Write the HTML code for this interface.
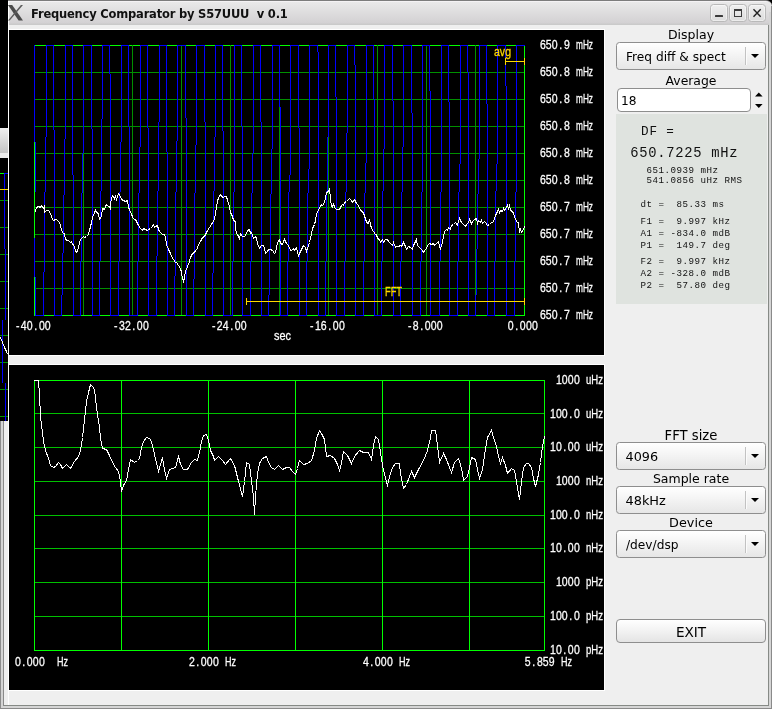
<!DOCTYPE html>
<html><head><meta charset="utf-8"><title>Frequency Comparator by S57UUU v 0.1</title>
<style>
html,body{margin:0;padding:0;}
body{width:772px;height:709px;overflow:hidden;position:relative;background:#efefef;font-family:"DejaVu Sans","Liberation Sans",sans-serif;font-size:12px;color:#000;}
#root{position:absolute;left:0;top:0;width:772px;height:709px;will-change:transform;}
.abs{position:absolute;}
#titlebar{left:8px;top:0;width:764px;height:25px;background:linear-gradient(#f4f2f4 0px,#f4f2f4 1px,#e9e9e9 1px,#d3d1d3 22px,#cacaca 23px,#cacaca 24px);border-top:1px solid #7c7c7c;box-sizing:border-box;border-top-right-radius:6px;}
#corner{left:760px;top:0;width:12px;height:12px;background:#000;}
#title{left:31px;top:7px;font-weight:bold;font-size:11.5px;letter-spacing:-0.2px;line-height:14px;white-space:pre;color:#111;}
.wbtn{top:4px;width:17.5px;height:18px;box-sizing:border-box;border:1px solid #b9b9b9;border-radius:3.5px;background:linear-gradient(#efefef,#dcdcdc);box-shadow:inset 0 0 0 1px rgba(255,255,255,.45);}
.lbl{z-index:2;text-align:center;left:616px;width:150px;line-height:14px;white-space:pre;}
.combo{left:616px;width:150px;height:28px;box-sizing:border-box;border:1px solid #8e8e8e;border-radius:3.5px;background:linear-gradient(#ffffff,#f4f4f4 45%,#e6e6e6);}
.combo span{position:absolute;left:9px;top:6.5px;line-height:14px;white-space:pre;font-size:12.2px;}
.combo i{position:absolute;left:128px;top:4px;width:1px;height:18px;background:#c2c2c2;box-shadow:1px 0 0 #fbfbfb;}
.combo b{position:absolute;left:133.5px;top:11.4px;width:0;height:0;border-left:4px solid transparent;border-right:4px solid transparent;border-top:4px solid #000;}
#spin{left:617px;top:88px;width:134px;height:24px;box-sizing:border-box;border:1px solid #8e8e8e;border-radius:4px;background:#fff;}
#spin span{position:absolute;left:3px;top:5px;line-height:14px;font-size:12.2px;}
#panel{left:616px;top:114px;width:151px;height:190px;background:#dfe3df;font-family:"Liberation Mono","DejaVu Sans Mono",monospace;color:#111;}
#panel div{position:absolute;white-space:pre;line-height:12px;}
#exit{left:616px;top:619px;width:150px;height:24px;box-sizing:border-box;border:1px solid #8e8e8e;border-radius:4px;background:linear-gradient(#ffffff,#f2f2f2 50%,#e4e4e4);text-align:center;font-size:13.6px;line-height:24px;}
</style></head>
<body>
<div id="root">
<div class="abs" id="corner"></div>
<div class="abs" id="titlebar"></div>
<svg width="772" height="709" viewBox="0 0 772 709" style="position:absolute;left:0;top:0" shape-rendering="crispEdges">
<style>text{font-family:"Liberation Sans","DejaVu Sans",sans-serif;font-size:10.5px;}</style>
<rect x="8" y="29" width="597" height="327" fill="#fff"/>
<rect x="8" y="364" width="597" height="327" fill="#fff"/>
<rect x="9" y="30" width="595" height="325" fill="#000"/>
<rect x="9" y="365" width="595" height="325" fill="#000"/>
<path d="M34 45h491v271h-491z M35 46v269h489v-269z" fill="#00ff00" fill-rule="evenodd"/>
<path d="M35 72h489v1h-489zM35 99h489v1h-489zM35 126h489v1h-489zM35 153h489v1h-489zM35 180h489v1h-489zM35 207h489v1h-489zM35 234h489v1h-489zM35 261h489v1h-489zM35 288h489v1h-489zM83 45h1v270h-1zM132 45h1v270h-1zM181 45h1v270h-1zM230 45h1v270h-1zM279 45h1v270h-1zM328 45h1v270h-1zM377 45h1v270h-1zM426 45h1v270h-1zM475 45h1v270h-1z" fill="#009000"/>
<path d="M34 45h1v97h-1zM35 142h1v50h-1zM34 238h1v39h-1zM35 277h1v39h-1zM46 45h1v92h-1zM45 137h1v55h-1zM44 192h1v80h-1zM43 272h1v44h-1zM35 315h9v1h-9zM46 45h8v1h-8zM53 45h1v85h-1zM54 130h1v186h-1zM65 45h1v94h-1zM64 139h1v56h-1zM63 195h1v58h-1zM62 253h1v42h-1zM61 295h1v21h-1zM54 315h8v1h-8zM65 45h8v1h-8zM72 45h1v130h-1zM73 175h1v141h-1zM83 45h1v108h-1zM82 153h1v40h-1zM81 193h1v68h-1zM80 261h1v55h-1zM73 315h8v1h-8zM83 45h9v1h-9zM91 45h1v84h-1zM92 129h1v187h-1zM102 45h1v74h-1zM101 119h1v72h-1zM100 191h1v70h-1zM99 261h1v55h-1zM92 315h8v1h-8zM102 45h8v1h-8zM109 45h1v29h-1zM110 74h1v242h-1zM121 45h1v97h-1zM120 142h1v50h-1zM119 192h1v69h-1zM118 261h1v55h-1zM110 315h9v1h-9zM121 45h8v1h-8zM128 45h1v82h-1zM129 127h1v189h-1zM140 45h1v102h-1zM139 147h1v46h-1zM138 193h1v68h-1zM137 261h1v55h-1zM129 315h9v1h-9zM140 45h8v1h-8zM147 45h1v83h-1zM148 128h1v188h-1zM159 45h1v77h-1zM158 122h1v69h-1zM157 191h1v65h-1zM156 256h1v60h-1zM148 315h9v1h-9zM159 45h8v1h-8zM166 45h1v107h-1zM167 152h1v164h-1zM177 45h1v96h-1zM176 141h1v51h-1zM175 192h1v84h-1zM174 276h1v40h-1zM167 315h8v1h-8zM177 45h9v1h-9zM185 45h1v73h-1zM186 118h1v198h-1zM196 45h1v100h-1zM195 145h1v48h-1zM194 193h1v86h-1zM193 279h1v37h-1zM186 315h8v1h-8zM196 45h9v1h-9zM204 45h1v77h-1zM205 122h1v194h-1zM215 45h1v92h-1zM214 137h1v54h-1zM213 191h1v82h-1zM212 273h1v43h-1zM205 315h8v1h-8zM215 45h8v1h-8zM222 45h1v86h-1zM223 131h1v185h-1zM234 45h1v147h-1zM233 192h1v69h-1zM232 261h1v55h-1zM223 315h10v1h-10zM234 45h8v1h-8zM241 45h1v81h-1zM242 126h1v190h-1zM253 45h1v108h-1zM252 153h1v40h-1zM251 193h1v68h-1zM250 261h1v55h-1zM242 315h9v1h-9zM253 45h8v1h-8zM260 45h1v77h-1zM261 122h1v194h-1zM272 45h1v104h-1zM271 149h1v45h-1zM270 194h1v55h-1zM269 249h1v46h-1zM268 295h1v21h-1zM261 315h8v1h-8zM272 45h8v1h-8zM279 45h1v62h-1zM280 107h1v209h-1zM290 45h1v130h-1zM289 175h1v17h-1zM288 192h1v69h-1zM287 261h1v55h-1zM280 315h8v1h-8zM290 45h9v1h-9zM298 45h1v83h-1zM299 128h1v188h-1zM309 45h1v124h-1zM308 169h1v24h-1zM307 193h1v68h-1zM306 261h1v55h-1zM299 315h8v1h-8zM309 45h9v1h-9zM317 45h1v7h-1zM318 52h1v264h-1zM328 45h1v92h-1zM327 137h1v54h-1zM326 191h1v70h-1zM325 261h1v55h-1zM318 315h8v1h-8zM328 45h8v1h-8zM335 45h1v52h-1zM336 97h1v219h-1zM347 45h1v88h-1zM346 133h1v59h-1zM345 192h1v69h-1zM344 261h1v55h-1zM336 315h9v1h-9zM347 45h8v1h-8zM354 45h1v20h-1zM355 65h1v251h-1zM366 45h1v118h-1zM365 163h1v30h-1zM364 193h1v68h-1zM363 261h1v55h-1zM355 315h9v1h-9zM366 45h8v1h-8zM373 45h1v54h-1zM374 99h1v217h-1zM384 45h1v104h-1zM383 149h1v42h-1zM382 191h1v70h-1zM381 261h1v55h-1zM374 315h8v1h-8zM384 45h9v1h-9zM392 45h1v56h-1zM393 101h1v215h-1zM403 45h1v102h-1zM402 147h1v45h-1zM401 192h1v69h-1zM400 261h1v55h-1zM393 315h8v1h-8zM403 45h9v1h-9zM411 45h1v68h-1zM412 113h1v203h-1zM422 45h1v147h-1zM421 192h1v69h-1zM420 261h1v55h-1zM412 315h9v1h-9zM422 45h8v1h-8zM429 45h1v46h-1zM430 91h1v225h-1zM441 45h1v147h-1zM440 192h1v69h-1zM439 261h1v55h-1zM430 315h10v1h-10zM441 45h8v1h-8zM448 45h1v57h-1zM449 102h1v214h-1zM460 45h1v119h-1zM459 164h1v28h-1zM458 192h1v69h-1zM457 261h1v55h-1zM449 315h9v1h-9zM460 45h8v1h-8zM467 45h1v27h-1zM468 72h1v244h-1zM479 45h1v114h-1zM478 159h1v35h-1zM477 194h1v55h-1zM476 249h1v46h-1zM475 295h1v21h-1zM468 315h8v1h-8zM479 45h8v1h-8zM486 45h1v59h-1zM487 104h1v212h-1zM497 45h1v119h-1zM496 164h1v27h-1zM495 191h1v70h-1zM494 261h1v55h-1zM487 315h8v1h-8zM497 45h9v1h-9zM505 45h1v41h-1zM506 86h1v230h-1zM516 45h1v147h-1zM515 192h1v69h-1zM514 261h1v55h-1zM506 315h9v1h-9zM516 45h9v1h-9z" fill="#0000ff"/>
<rect x="34" y="142" width="1" height="96" fill="#00ff00"/>
<rect x="34" y="277" width="1" height="39" fill="#00ff00"/>
<polyline points="35.5,211.5 36.5,207.5 38.5,206.5 40.5,207.5 41.5,205.5 43.5,208.5 44.5,205.5 44.5,212.5 46.5,210.5 48.5,210.5 50.5,213.5 52.5,219.5 53.5,220.5 55.5,219.5 56.5,219.5 58.5,221.5 60.5,224.5 61.5,230.5 63.5,233.5 64.5,233.5 65.5,239.5 67.5,240.5 68.5,240.5 70.5,242.5 71.5,241.5 72.5,244.5 73.5,244.5 75.5,250.5 76.5,252.5 77.5,251.5 78.5,246.5 80.5,239.5 81.5,238.5 83.5,236.5 84.5,237.5 86.5,236.5 88.5,234.5 89.5,230.5 91.5,222.5 92.5,217.5 94.5,212.5 95.5,210.5 96.5,212.5 98.5,213.5 99.5,219.5 101.5,216.5 102.5,208.5 104.5,209.5 105.5,206.5 106.5,204.5 108.5,206.5 109.5,206.5 110.5,209.5 110.5,202.5 112.5,195.5 113.5,196.5 114.5,198.5 115.5,196.5 116.5,199.5 117.5,196.5 118.5,193.5 120.5,196.5 121.5,199.5 123.5,200.5 125.5,201.5 127.5,200.5 128.5,206.5 129.5,210.5 131.5,213.5 132.5,217.5 134.5,219.5 135.5,219.5 136.5,221.5 138.5,225.5 140.5,228.5 142.5,230.5 143.5,228.5 145.5,229.5 147.5,230.5 148.5,229.5 150.5,228.5 151.5,227.5 153.5,224.5 154.5,227.5 155.5,226.5 157.5,225.5 158.5,229.5 159.5,231.5 161.5,233.5 162.5,234.5 164.5,234.5 165.5,237.5 166.5,244.5 168.5,249.5 170.5,253.5 171.5,256.5 173.5,259.5 175.5,262.5 176.5,262.5 178.5,265.5 180.5,268.5 181.5,272.5 182.5,278.5 183.5,281.5 184.5,277.5 185.5,271.5 187.5,266.5 189.5,261.5 190.5,257.5 192.5,253.5 194.5,252.5 195.5,250.5 197.5,248.5 198.5,244.5 200.5,241.5 202.5,237.5 204.5,236.5 205.5,234.5 207.5,230.5 209.5,227.5 211.5,224.5 212.5,222.5 214.5,219.5 215.5,213.5 216.5,206.5 217.5,201.5 218.5,197.5 220.5,194.5 221.5,196.5 223.5,197.5 224.5,196.5 226.5,196.5 227.5,200.5 229.5,206.5 230.5,212.5 232.5,216.5 233.5,220.5 235.5,221.5 235.5,228.5 236.5,233.5 237.5,234.5 239.5,238.5 240.5,233.5 242.5,236.5 244.5,236.5 246.5,233.5 247.5,230.5 249.5,229.5 250.5,233.5 251.5,232.5 253.5,238.5 255.5,236.5 256.5,238.5 257.5,243.5 259.5,248.5 261.5,245.5 263.5,245.5 264.5,248.5 265.5,253.5 267.5,251.5 268.5,249.5 270.5,249.5 272.5,250.5 274.5,253.5 275.5,252.5 277.5,242.5 279.5,239.5 280.5,243.5 282.5,244.5 283.5,241.5 284.5,239.5 286.5,243.5 288.5,245.5 290.5,250.5 291.5,250.5 293.5,248.5 294.5,250.5 296.5,247.5 297.5,252.5 298.5,255.5 300.5,251.5 302.5,247.5 303.5,245.5 305.5,247.5 306.5,251.5 307.5,248.5 309.5,242.5 311.5,234.5 312.5,228.5 314.5,224.5 315.5,220.5 316.5,214.5 318.5,209.5 320.5,206.5 321.5,204.5 322.5,205.5 324.5,202.5 325.5,197.5 326.5,192.5 328.5,191.5 329.5,189.5 330.5,198.5 331.5,206.5 332.5,207.5 333.5,203.5 334.5,207.5 336.5,209.5 337.5,209.5 339.5,209.5 341.5,205.5 342.5,204.5 343.5,205.5 344.5,202.5 346.5,201.5 348.5,199.5 349.5,198.5 351.5,200.5 352.5,202.5 354.5,199.5 355.5,201.5 356.5,203.5 357.5,204.5 359.5,207.5 360.5,210.5 362.5,211.5 364.5,215.5 365.5,219.5 367.5,223.5 368.5,223.5 369.5,219.5 370.5,224.5 371.5,228.5 373.5,231.5 375.5,234.5 376.5,234.5 377.5,238.5 379.5,239.5 380.5,242.5 382.5,239.5 383.5,242.5 385.5,239.5 387.5,239.5 388.5,241.5 389.5,242.5 391.5,244.5 392.5,245.5 393.5,242.5 395.5,247.5 396.5,246.5 398.5,246.5 400.5,245.5 401.5,246.5 403.5,242.5 405.5,246.5 406.5,249.5 408.5,246.5 410.5,247.5 412.5,249.5 413.5,245.5 416.5,239.5 417.5,245.5 419.5,247.5 421.5,249.5 423.5,252.5 424.5,250.5 426.5,248.5 427.5,245.5 429.5,243.5 431.5,244.5 433.5,243.5 434.5,245.5 436.5,243.5 438.5,241.5 439.5,246.5 440.5,248.5 442.5,242.5 443.5,236.5 444.5,231.5 446.5,229.5 447.5,230.5 448.5,227.5 450.5,229.5 451.5,225.5 453.5,224.5 455.5,222.5 457.5,225.5 458.5,221.5 459.5,218.5 461.5,222.5 462.5,223.5 464.5,225.5 465.5,226.5 466.5,224.5 468.5,222.5 469.5,219.5 471.5,223.5 472.5,221.5 474.5,219.5 476.5,218.5 477.5,223.5 478.5,220.5 480.5,222.5 481.5,220.5 482.5,223.5 484.5,221.5 485.5,222.5 487.5,225.5 489.5,224.5 491.5,222.5 492.5,222.5 494.5,219.5 495.5,215.5 497.5,211.5 498.5,209.5 499.5,212.5 500.5,210.5 502.5,211.5 503.5,208.5 504.5,210.5 506.5,207.5 507.5,205.5 508.5,208.5 509.5,205.5 510.5,210.5 512.5,211.5 513.5,213.5 514.5,216.5 516.5,221.5 517.5,222.5 518.5,222.5 519.5,232.5 520.5,229.5 521.5,232.5 523.5,229.5 524.5,226.5" fill="none" stroke="#fff" stroke-width="1" stroke-linejoin="miter" stroke-linecap="square"/>
<path d="M246 301h279v1h-279z M246 298h1v7h-1z M524 298h1v7h-1z" fill="#ffd800"/>
<path d="M505 61h20v1h-20z M505 58h1v7h-1z M524 58h1v7h-1z" fill="#ffd800"/>
<g shape-rendering="auto" opacity="0.995">
<text transform="scale(1,1.14)" x="385" y="259.65" textLength="17" lengthAdjust="spacingAndGlyphs" fill="#ffd800" stroke="#ffd800" stroke-width="0.25">FFT</text>
<text transform="scale(1,1.14)" x="494" y="49.56" textLength="17" lengthAdjust="spacingAndGlyphs" fill="#ffd800" stroke="#ffd800" stroke-width="0.25">avg</text>
<text transform="scale(1,1.14)" x="539.88 545.88 551.88 559.34 563.88" y="43.42" fill="#ffffff" stroke="#ffffff" stroke-width="0.25" xml:space="preserve">650.9</text><text transform="scale(1,1.14)" x="576" y="43.42" textLength="17" lengthAdjust="spacingAndGlyphs" fill="#ffffff" stroke="#ffffff" stroke-width="0.25">mHz</text>
<text transform="scale(1,1.14)" x="539.88 545.88 551.88 559.34 563.88" y="67.11" fill="#ffffff" stroke="#ffffff" stroke-width="0.25" xml:space="preserve">650.8</text><text transform="scale(1,1.14)" x="576" y="67.11" textLength="17" lengthAdjust="spacingAndGlyphs" fill="#ffffff" stroke="#ffffff" stroke-width="0.25">mHz</text>
<text transform="scale(1,1.14)" x="539.88 545.88 551.88 559.34 563.88" y="90.79" fill="#ffffff" stroke="#ffffff" stroke-width="0.25" xml:space="preserve">650.8</text><text transform="scale(1,1.14)" x="576" y="90.79" textLength="17" lengthAdjust="spacingAndGlyphs" fill="#ffffff" stroke="#ffffff" stroke-width="0.25">mHz</text>
<text transform="scale(1,1.14)" x="539.88 545.88 551.88 559.34 563.88" y="114.47" fill="#ffffff" stroke="#ffffff" stroke-width="0.25" xml:space="preserve">650.8</text><text transform="scale(1,1.14)" x="576" y="114.47" textLength="17" lengthAdjust="spacingAndGlyphs" fill="#ffffff" stroke="#ffffff" stroke-width="0.25">mHz</text>
<text transform="scale(1,1.14)" x="539.88 545.88 551.88 559.34 563.88" y="138.16" fill="#ffffff" stroke="#ffffff" stroke-width="0.25" xml:space="preserve">650.8</text><text transform="scale(1,1.14)" x="576" y="138.16" textLength="17" lengthAdjust="spacingAndGlyphs" fill="#ffffff" stroke="#ffffff" stroke-width="0.25">mHz</text>
<text transform="scale(1,1.14)" x="539.88 545.88 551.88 559.34 563.88" y="161.84" fill="#ffffff" stroke="#ffffff" stroke-width="0.25" xml:space="preserve">650.8</text><text transform="scale(1,1.14)" x="576" y="161.84" textLength="17" lengthAdjust="spacingAndGlyphs" fill="#ffffff" stroke="#ffffff" stroke-width="0.25">mHz</text>
<text transform="scale(1,1.14)" x="539.88 545.88 551.88 559.34 563.88" y="185.53" fill="#ffffff" stroke="#ffffff" stroke-width="0.25" xml:space="preserve">650.7</text><text transform="scale(1,1.14)" x="576" y="185.53" textLength="17" lengthAdjust="spacingAndGlyphs" fill="#ffffff" stroke="#ffffff" stroke-width="0.25">mHz</text>
<text transform="scale(1,1.14)" x="539.88 545.88 551.88 559.34 563.88" y="209.21" fill="#ffffff" stroke="#ffffff" stroke-width="0.25" xml:space="preserve">650.7</text><text transform="scale(1,1.14)" x="576" y="209.21" textLength="17" lengthAdjust="spacingAndGlyphs" fill="#ffffff" stroke="#ffffff" stroke-width="0.25">mHz</text>
<text transform="scale(1,1.14)" x="539.88 545.88 551.88 559.34 563.88" y="232.89" fill="#ffffff" stroke="#ffffff" stroke-width="0.25" xml:space="preserve">650.7</text><text transform="scale(1,1.14)" x="576" y="232.89" textLength="17" lengthAdjust="spacingAndGlyphs" fill="#ffffff" stroke="#ffffff" stroke-width="0.25">mHz</text>
<text transform="scale(1,1.14)" x="539.88 545.88 551.88 559.34 563.88" y="256.58" fill="#ffffff" stroke="#ffffff" stroke-width="0.25" xml:space="preserve">650.7</text><text transform="scale(1,1.14)" x="576" y="256.58" textLength="17" lengthAdjust="spacingAndGlyphs" fill="#ffffff" stroke="#ffffff" stroke-width="0.25">mHz</text>
<text transform="scale(1,1.14)" x="539.88 545.88 551.88 559.34 563.88" y="280.26" fill="#ffffff" stroke="#ffffff" stroke-width="0.25" xml:space="preserve">650.7</text><text transform="scale(1,1.14)" x="576" y="280.26" textLength="17" lengthAdjust="spacingAndGlyphs" fill="#ffffff" stroke="#ffffff" stroke-width="0.25">mHz</text>
<text transform="scale(1,1.14)" x="16.05 20.88 26.88 34.34 38.88 44.88" y="289.47" fill="#ffffff" stroke="#ffffff" stroke-width="0.25" xml:space="preserve">-40.00</text>
<text transform="scale(1,1.14)" x="114.05 118.88 124.88 132.34 136.88 142.88" y="289.47" fill="#ffffff" stroke="#ffffff" stroke-width="0.25" xml:space="preserve">-32.00</text>
<text transform="scale(1,1.14)" x="212.05 216.88 222.88 230.34 234.88 240.88" y="289.47" fill="#ffffff" stroke="#ffffff" stroke-width="0.25" xml:space="preserve">-24.00</text>
<text transform="scale(1,1.14)" x="310.05 314.88 320.88 328.34 332.88 338.88" y="289.47" fill="#ffffff" stroke="#ffffff" stroke-width="0.25" xml:space="preserve">-16.00</text>
<text transform="scale(1,1.14)" x="408.05 412.88 420.34 424.88 430.88 436.88" y="289.47" fill="#ffffff" stroke="#ffffff" stroke-width="0.25" xml:space="preserve">-8.000</text>
<text transform="scale(1,1.14)" x="507.88 515.34 519.88 525.88 531.88" y="289.47" fill="#ffffff" stroke="#ffffff" stroke-width="0.25" xml:space="preserve">0.000</text>
<text transform="scale(1,1.14)" x="274" y="298.25" textLength="17" lengthAdjust="spacingAndGlyphs" fill="#ffffff" stroke="#ffffff" stroke-width="0.25">sec</text>
</g>
<path d="M34 380h511v271h-511z M35 381v269h509v-269z" fill="#00ff00" fill-rule="evenodd"/>
<path d="M35 413h509v1h-509zM35 447h509v1h-509zM35 481h509v1h-509zM35 515h509v1h-509zM35 548h509v1h-509zM35 582h509v1h-509zM35 616h509v1h-509z" fill="#00c000"/>
<path d="M121 381h1v269h-1zM208 381h1v269h-1zM295 381h1v269h-1zM382 381h1v269h-1zM469 381h1v269h-1z" fill="#00ff00"/>
<polyline points="34.5,380.5 38.5,380.5 39.5,395.5 40.5,416.5 42.5,432.5 43.5,441.5 45.5,450.5 48.5,458.5 50.5,465.5 53.5,467.5 55.5,466.5 58.5,462.5 60.5,464.5 62.5,468.5 66.5,464.5 70.5,468.5 74.5,461.5 78.5,456.5 80.5,450.5 82.5,437.5 84.5,419.5 86.5,401.5 88.5,392.5 90.5,384.5 92.5,386.5 94.5,389.5 95.5,398.5 97.5,414.5 99.5,427.5 100.5,438.5 102.5,448.5 106.5,449.5 109.5,455.5 112.5,462.5 115.5,467.5 118.5,471.5 120.5,481.5 121.5,491.5 123.5,485.5 126.5,480.5 128.5,469.5 130.5,459.5 134.5,462.5 137.5,460.5 139.5,458.5 141.5,447.5 143.5,441.5 146.5,437.5 149.5,438.5 151.5,441.5 154.5,454.5 158.5,471.5 162.5,457.5 164.5,469.5 166.5,478.5 169.5,469.5 172.5,468.5 175.5,467.5 178.5,456.5 180.5,464.5 183.5,469.5 187.5,469.5 191.5,462.5 194.5,459.5 197.5,460.5 199.5,452.5 201.5,441.5 203.5,435.5 206.5,434.5 208.5,440.5 210.5,450.5 213.5,456.5 214.5,460.5 218.5,456.5 222.5,460.5 225.5,464.5 230.5,458.5 234.5,465.5 238.5,481.5 242.5,496.5 244.5,481.5 246.5,462.5 249.5,464.5 251.5,481.5 253.5,496.5 254.5,514.5 255.5,496.5 257.5,473.5 259.5,463.5 262.5,458.5 266.5,456.5 268.5,462.5 271.5,467.5 274.5,469.5 278.5,465.5 282.5,469.5 286.5,467.5 289.5,467.5 292.5,471.5 295.5,474.5 297.5,468.5 299.5,460.5 303.5,464.5 307.5,463.5 311.5,460.5 314.5,450.5 316.5,438.5 319.5,430.5 321.5,433.5 324.5,439.5 326.5,456.5 330.5,455.5 334.5,458.5 337.5,464.5 339.5,470.5 341.5,463.5 343.5,451.5 347.5,455.5 351.5,463.5 354.5,456.5 359.5,450.5 363.5,452.5 368.5,452.5 371.5,459.5 373.5,445.5 375.5,436.5 378.5,439.5 380.5,452.5 382.5,465.5 384.5,474.5 387.5,485.5 390.5,473.5 392.5,467.5 395.5,463.5 399.5,463.5 400.5,473.5 403.5,488.5 406.5,484.5 409.5,476.5 411.5,471.5 414.5,477.5 418.5,469.5 423.5,460.5 427.5,450.5 430.5,437.5 431.5,430.5 435.5,430.5 437.5,445.5 439.5,462.5 443.5,453.5 446.5,459.5 449.5,467.5 451.5,472.5 454.5,462.5 458.5,458.5 460.5,464.5 462.5,473.5 463.5,480.5 467.5,476.5 469.5,467.5 471.5,457.5 475.5,459.5 477.5,469.5 479.5,478.5 482.5,469.5 484.5,455.5 487.5,437.5 491.5,430.5 493.5,437.5 496.5,446.5 498.5,456.5 500.5,463.5 502.5,457.5 505.5,465.5 507.5,473.5 511.5,468.5 514.5,470.5 516.5,481.5 519.5,499.5 521.5,481.5 523.5,467.5 526.5,463.5 528.5,463.5 531.5,467.5 533.5,478.5 535.5,486.5 538.5,474.5 540.5,462.5 542.5,446.5 544.5,436.5" fill="none" stroke="#fff" stroke-width="1" stroke-linejoin="miter" stroke-linecap="square"/>
<g shape-rendering="auto" opacity="0.995">
<text transform="scale(1,1.14)" x="555.88 561.88 567.88 573.88" y="337.28" fill="#ffffff" stroke="#ffffff" stroke-width="0.25" xml:space="preserve">1000</text><text transform="scale(1,1.14)" x="586" y="337.28" textLength="17" lengthAdjust="spacingAndGlyphs" fill="#ffffff" stroke="#ffffff" stroke-width="0.25">uHz</text>
<text transform="scale(1,1.14)" x="549.88 555.88 561.88 569.34 573.88" y="366.23" fill="#ffffff" stroke="#ffffff" stroke-width="0.25" xml:space="preserve">100.0</text><text transform="scale(1,1.14)" x="586" y="366.23" textLength="17" lengthAdjust="spacingAndGlyphs" fill="#ffffff" stroke="#ffffff" stroke-width="0.25">uHz</text>
<text transform="scale(1,1.14)" x="549.88 555.88 563.34 567.88 573.88" y="396.05" fill="#ffffff" stroke="#ffffff" stroke-width="0.25" xml:space="preserve">10.00</text><text transform="scale(1,1.14)" x="586" y="396.05" textLength="17" lengthAdjust="spacingAndGlyphs" fill="#ffffff" stroke="#ffffff" stroke-width="0.25">uHz</text>
<text transform="scale(1,1.14)" x="555.88 561.88 567.88 573.88" y="425.88" fill="#ffffff" stroke="#ffffff" stroke-width="0.25" xml:space="preserve">1000</text><text transform="scale(1,1.14)" x="586" y="425.88" textLength="17" lengthAdjust="spacingAndGlyphs" fill="#ffffff" stroke="#ffffff" stroke-width="0.25">nHz</text>
<text transform="scale(1,1.14)" x="549.88 555.88 561.88 569.34 573.88" y="455.70" fill="#ffffff" stroke="#ffffff" stroke-width="0.25" xml:space="preserve">100.0</text><text transform="scale(1,1.14)" x="586" y="455.70" textLength="17" lengthAdjust="spacingAndGlyphs" fill="#ffffff" stroke="#ffffff" stroke-width="0.25">nHz</text>
<text transform="scale(1,1.14)" x="549.88 555.88 563.34 567.88 573.88" y="484.65" fill="#ffffff" stroke="#ffffff" stroke-width="0.25" xml:space="preserve">10.00</text><text transform="scale(1,1.14)" x="586" y="484.65" textLength="17" lengthAdjust="spacingAndGlyphs" fill="#ffffff" stroke="#ffffff" stroke-width="0.25">nHz</text>
<text transform="scale(1,1.14)" x="555.88 561.88 567.88 573.88" y="514.47" fill="#ffffff" stroke="#ffffff" stroke-width="0.25" xml:space="preserve">1000</text><text transform="scale(1,1.14)" x="586" y="514.47" textLength="17" lengthAdjust="spacingAndGlyphs" fill="#ffffff" stroke="#ffffff" stroke-width="0.25">pHz</text>
<text transform="scale(1,1.14)" x="549.88 555.88 561.88 569.34 573.88" y="544.30" fill="#ffffff" stroke="#ffffff" stroke-width="0.25" xml:space="preserve">100.0</text><text transform="scale(1,1.14)" x="586" y="544.30" textLength="17" lengthAdjust="spacingAndGlyphs" fill="#ffffff" stroke="#ffffff" stroke-width="0.25">pHz</text>
<text transform="scale(1,1.14)" x="549.88 555.88 563.34 567.88 573.88" y="574.12" fill="#ffffff" stroke="#ffffff" stroke-width="0.25" xml:space="preserve">10.00</text><text transform="scale(1,1.14)" x="586" y="574.12" textLength="17" lengthAdjust="spacingAndGlyphs" fill="#ffffff" stroke="#ffffff" stroke-width="0.25">pHz</text>
<text transform="scale(1,1.14)" x="14.88 22.34 26.88 32.88 38.88" y="584.21" fill="#ffffff" stroke="#ffffff" stroke-width="0.25" xml:space="preserve">0.000</text><text transform="scale(1,1.14)" x="57" y="584.21" textLength="11" lengthAdjust="spacingAndGlyphs" fill="#ffffff" stroke="#ffffff" stroke-width="0.25">Hz</text>
<text transform="scale(1,1.14)" x="188.88 196.34 200.88 206.88 212.88" y="584.21" fill="#ffffff" stroke="#ffffff" stroke-width="0.25" xml:space="preserve">2.000</text><text transform="scale(1,1.14)" x="225" y="584.21" textLength="11" lengthAdjust="spacingAndGlyphs" fill="#ffffff" stroke="#ffffff" stroke-width="0.25">Hz</text>
<text transform="scale(1,1.14)" x="362.88 370.34 374.88 380.88 386.88" y="584.21" fill="#ffffff" stroke="#ffffff" stroke-width="0.25" xml:space="preserve">4.000</text><text transform="scale(1,1.14)" x="399" y="584.21" textLength="11" lengthAdjust="spacingAndGlyphs" fill="#ffffff" stroke="#ffffff" stroke-width="0.25">Hz</text>
<text transform="scale(1,1.14)" x="524.88 532.34 536.88 542.88 548.88" y="584.21" fill="#ffffff" stroke="#ffffff" stroke-width="0.25" xml:space="preserve">5.859</text><text transform="scale(1,1.14)" x="561" y="584.21" textLength="11" lengthAdjust="spacingAndGlyphs" fill="#ffffff" stroke="#ffffff" stroke-width="0.25">Hz</text>
</g>
<rect x="0" y="0" width="8" height="421" fill="#000"/>
<defs><linearGradient id="tb2" x1="0" y1="0" x2="0" y2="1"><stop offset="0" stop-color="#efefef"/><stop offset="1" stop-color="#c4c4c4"/></linearGradient></defs>
<rect x="0" y="128" width="8" height="25" fill="url(#tb2)"/>
<rect x="0" y="153" width="8" height="5" fill="#ececec"/>
<path d="M0 173h8v1h-8zM0 200h8v1h-8zM0 227h8v1h-8zM0 254h8v1h-8zM0 281h8v1h-8zM0 308h8v1h-8zM0 335h8v1h-8zM0 362h8v1h-8zM0 389h8v1h-8zM0 416h8v1h-8z" fill="#009000"/>
<rect x="0" y="173" width="4" height="1" fill="#00ff00"/>
<path d="M4 173h4v1h-4z M4 173h1v76h-1z M5 249h1v71h-1z M2 320h1v63h-1z M5 383h1v38h-1z" fill="#0000ff"/>
<rect x="0" y="189" width="8" height="1" fill="#ffd800"/>
<polyline points="0.5,337.5 2.5,342.5 4.5,347.5 6.5,351.5 7.5,354.5" fill="none" stroke="#fff" stroke-width="1"/>
<rect x="0" y="421" width="1" height="288" fill="#8c8c8c"/>
<rect x="1" y="421" width="2" height="288" fill="#d4d4d4"/>
<rect x="3" y="421" width="1" height="288" fill="#8a8a8a"/>
<rect x="4" y="421" width="4" height="288" fill="#efefef"/>
<rect x="8" y="1" width="1" height="704" fill="#ffffff"/>
</svg>
<svg class="abs" style="left:8px;top:5px" width="15" height="16" viewBox="0 0 15 16"><path d="M0 0h4.2l10.8 15.6h-4.4z" fill="#4c4c4c"/><path d="M12.9 0h2.1l-13.3 15.6h-1.7z" fill="#5c5c5c"/></svg>
<div class="abs" id="title">Frequency Comparator by S57UUU  v 0.1</div>
<div class="abs wbtn" style="left:710.1px"></div>
<div class="abs wbtn" style="left:729.3px"></div>
<div class="abs wbtn" style="left:748.4px"></div>
<svg class="abs" style="left:711px;top:4px" width="56" height="18" viewBox="0 0 56 18"><rect x="4" y="11" width="8" height="2" rx="0.6" fill="#3a3a3a"/><path d="M23 5h8v8h-8z M24 7v5h6v-5z" fill="#3c3c3c" fill-rule="evenodd"/><path d="M42.5 5.3l7.2 7.4M49.7 5.3l-7.2 7.4" stroke="#222" stroke-width="1.4" fill="none"/></svg>

<div class="abs lbl" style="top:27.5px;font-size:12.5px">Display</div>
<div class="abs combo" style="top:42px"><span>Freq diff &amp; spect</span><i></i><b></b></div>
<div class="abs lbl" style="top:74px;font-size:12.4px">Average</div>
<div class="abs" id="spin"><span>18</span></div>
<svg class="abs" style="left:754px;top:91px" width="10" height="18" viewBox="0 0 10 18"><path d="M1 5.5l3.8-4 3.8 4z M1 13l3.8 4 3.8-4z" fill="#000"/></svg>

<div class="abs" id="panel">
<div style="left:25px;top:10.6px;font-size:12.6px;letter-spacing:0.84px;line-height:14px">DF =</div>
<div style="left:14.3px;top:32.4px;font-size:13.8px;letter-spacing:0.72px;line-height:15px">650.7225 mHz</div>
<div style="left:30.6px;top:51px;font-size:9.2px;letter-spacing:0.48px">651.0939 mHz</div>
<div style="left:30.6px;top:61px;font-size:9.2px;letter-spacing:0.48px">541.0856 uHz RMS</div>
<div style="left:24.6px;top:84.5px;font-size:9.2px;letter-spacing:0.48px">dt =  85.33 ms</div>
<div style="left:24.6px;top:101.5px;font-size:9.2px;letter-spacing:0.48px">F1 =  9.997 kHz</div>
<div style="left:24.6px;top:113.5px;font-size:9.2px;letter-spacing:0.48px">A1 = -834.0 mdB</div>
<div style="left:24.6px;top:125.5px;font-size:9.2px;letter-spacing:0.48px">P1 =  149.7 deg</div>
<div style="left:24.6px;top:141.5px;font-size:9.2px;letter-spacing:0.48px">F2 =  9.997 kHz</div>
<div style="left:24.6px;top:153.5px;font-size:9.2px;letter-spacing:0.48px">A2 = -328.0 mdB</div>
<div style="left:24.6px;top:165.5px;font-size:9.2px;letter-spacing:0.48px">P2 =  57.80 deg</div>
</div>

<div class="abs lbl" style="top:428.5px;font-size:13.2px">FFT size</div>
<div class="abs combo" style="top:442px"><span style="font-size:12.8px;left:8.5px;top:7px">4096</span><i></i><b></b></div>
<div class="abs lbl" style="top:471.5px;font-size:12.5px">Sample rate</div>
<div class="abs combo" style="top:486px"><span style="font-size:12.9px;left:8.5px">48kHz</span><i></i><b></b></div>
<div class="abs lbl" style="top:516px;font-size:12.8px">Device</div>
<div class="abs combo" style="top:530px"><span>/dev/dsp</span><i></i><b></b></div>
<div class="abs" id="exit">EXIT</div>

<!-- window frame right/bottom -->
<div class="abs" style="left:768px;top:25px;width:1px;height:681px;background:#868a86"></div>
<div class="abs" style="left:769px;top:12px;width:2px;height:696px;background:#d5d5d5"></div>
<div class="abs" style="left:771px;top:6px;width:1px;height:703px;background:#8a8a8a"></div>
<div class="abs" style="left:4px;top:705px;width:765px;height:1px;background:#868a86"></div>
<div class="abs" style="left:1px;top:706px;width:770px;height:2px;background:#d5d5d5"></div>
<div class="abs" style="left:0;top:708px;width:772px;height:1px;background:#8a8a8a"></div>
</div>
</body></html>
